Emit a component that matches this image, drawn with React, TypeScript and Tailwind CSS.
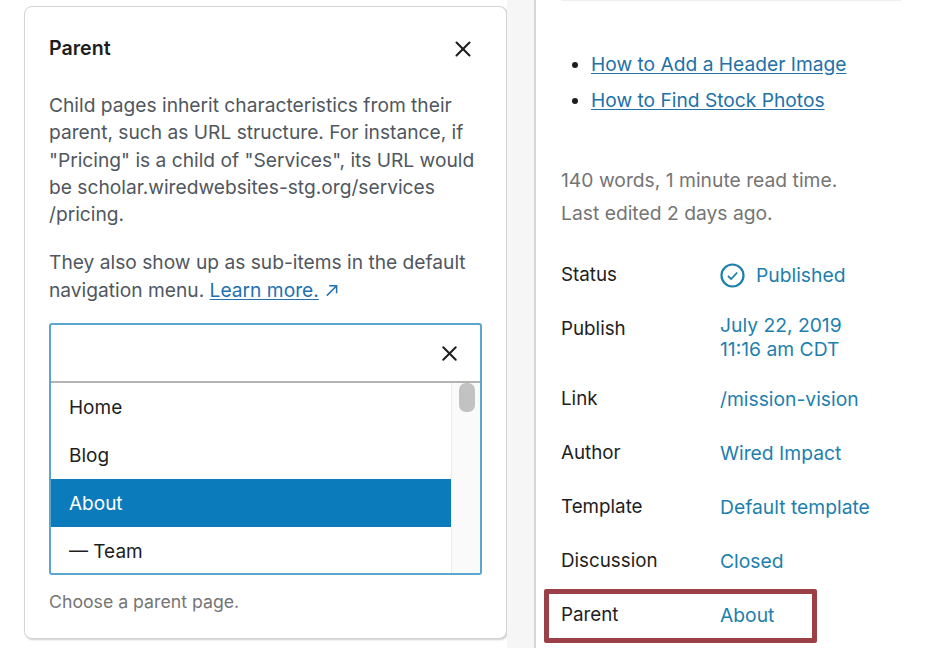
import { X } from 'lucide-react'

const FONT = "font-['Inter','Noto_Sans',sans-serif]"

const PAGES = ['Home', 'Blog', 'About', '— Team']

const ROWS: { label: string; value: string; h: string }[] = [
  { label: 'Publish', value: 'July 22, 2019\n11:16 am CDT', h: 'h-[70px]' },
  { label: 'Link', value: '/mission-vision', h: 'h-[54px]' },
  { label: 'Author', value: 'Wired Impact', h: 'h-[54px]' },
  { label: 'Template', value: 'Default template', h: 'h-[54px]' },
  { label: 'Discussion', value: 'Closed', h: 'h-[54px]' },
  { label: 'Parent', value: 'About', h: 'h-[54px]' },
]

function ParentPopover() {
  return (
    <div className="w-[483px] h-[633px] rounded-[8px] bg-white border border-[#d4d4d4] shadow-[1px_1px_2px_rgba(0,0,0,0.2)] pl-[24px] pr-[24px]">
      <div className="flex items-center justify-between h-[28px] mt-[28px] pr-[6px]">
        <h2 className="text-[19.6px] font-semibold text-[#1e1e1e]">Parent</h2>
        <X className="h-[26px] w-[26px] text-[#1e1e1e]" strokeWidth={1.9} />
      </div>
      <p className="mt-[29px] text-[19.2px] leading-[27.3px] text-[#50575e]">
        Child pages inherit characteristics from their<br />
        parent, such as URL structure. For instance, if<br />
        "Pricing" is a child of "Services", its URL would<br />
        be scholar.wiredwebsites-stg.org/services<br />
        /pricing.
      </p>
      <p className="mt-[20px] text-[19.2px] leading-[28px] text-[#50575e]">
        They also show up as sub-items in the default<br />
        navigation menu. <span className="text-[#2271b1] underline underline-offset-2">Learn more.</span>
        <svg className="inline-block ml-[6px] mb-[3px] h-[13px] w-[13px] text-[#2271b1]" viewBox="0 0 14 14" fill="none" stroke="currentColor" strokeWidth="1.6">
          <path d="M2 12.5 12 2.5M4.5 2h8v8" />
        </svg>
      </p>

      {/* combobox */}
      <div className="mt-[19px] w-[433px] h-[252px] rounded-[3px] border-2 border-[#5aa6cf] overflow-hidden">
        <div className="flex items-center justify-end h-[58px] pr-[18px] border-b-2 border-[#b4b4b4]">
          <X className="h-[25px] w-[25px] text-[#1e1e1e]" strokeWidth={1.9} />
        </div>
        <div className="flex h-[190px]">
          <ul className="flex-1 text-[19px] text-[#1e1e1e]">
            {PAGES.map((p) => (
              <li
                key={p}
                className={`flex items-center h-[48px] pl-[18px] pt-[2px] ${p === 'About' ? 'bg-[#0c7bbb] text-white' : ''}`}
              >
                {p}
              </li>
            ))}
          </ul>
          <div className="w-[29px] bg-[#fafafa] border-l border-[#ececec] pl-[7px]">
            <div className="w-[16px] h-[29px] rounded-[7px] bg-[#c2c2c2]" />
          </div>
        </div>
      </div>
      <p className="mt-[14px] text-[17.7px] text-[#757575]">Choose a parent page.</p>
    </div>
  )
}

function StatusIcon() {
  return (
    <svg className="h-[25px] w-[25px] text-[#1d7fae]" viewBox="0 0 25 25" fill="none" stroke="currentColor" strokeWidth="2.2">
      <circle cx="12.5" cy="12.5" r="11" />
      <path d="M8 13l3.2 3 6-6.5" strokeWidth="1.8" />
    </svg>
  )
}

export default function App() {
  return (
    <div className={`${FONT} flex h-[648px] w-[926px] overflow-hidden bg-white`}>
      {/* editor side */}
      <div className="w-[534px] h-full shrink-0 flex bg-white pl-[24px] pt-[6px]">
        <ParentPopover />
        <div className="flex-1 bg-[#f6f6f6] -mt-[6px]" />
      </div>

      {/* settings sidebar */}
      <div className="relative flex-1 h-full border-l-2 border-[#d6d6d6] pl-[25px]">
        <div className="h-px w-[340px] bg-[#eeeeee]" />
        <ul className="mt-[45px] list-disc pl-[30px] text-[19.2px] leading-[36px] marker:text-[#1e1e1e]">
          <li><a className="text-[#2271a8] underline underline-offset-2">How to Add a Header Image</a></li>
          <li><a className="text-[#2271a8] underline underline-offset-2">How to Find Stock Photos</a></li>
        </ul>
        <p className="mt-[46px] text-[19.3px] leading-[33px] text-[#757575]">
          140 words, 1 minute read time.<br />
          Last edited 2 days ago.
        </p>

        <div className="mt-[25px]">
          <div className="flex h-[61px] items-start pt-[6px]">
            <span className="w-[159px] text-[18.8px] text-[#1e1e1e]">Status</span>
            <span className="flex items-center gap-[11px] text-[19.3px] text-[#1d7fae]"><StatusIcon />Published</span>
          </div>
          {ROWS.map((r) => (
            <div key={r.label} className={`flex items-start ${r.h}`}>
              <span className="w-[159px] mt-px text-[18.8px] text-[#1e1e1e] leading-[24px]">{r.label}</span>
              <span className={`text-[19.3px] text-[#1d7fae] leading-[24px] whitespace-pre-line ${r.label === 'Publish' ? '-mt-[3px]' : 'mt-px'}`}>{r.value}</span>
            </div>
          ))}
        </div>

        {/* red annotation around the Parent row */}
        <div className="absolute left-[8px] top-[589px] h-[54px] w-[273px] rounded-[2px] border-[5px] border-[#9c4048]" />
      </div>
    </div>
  )
}
